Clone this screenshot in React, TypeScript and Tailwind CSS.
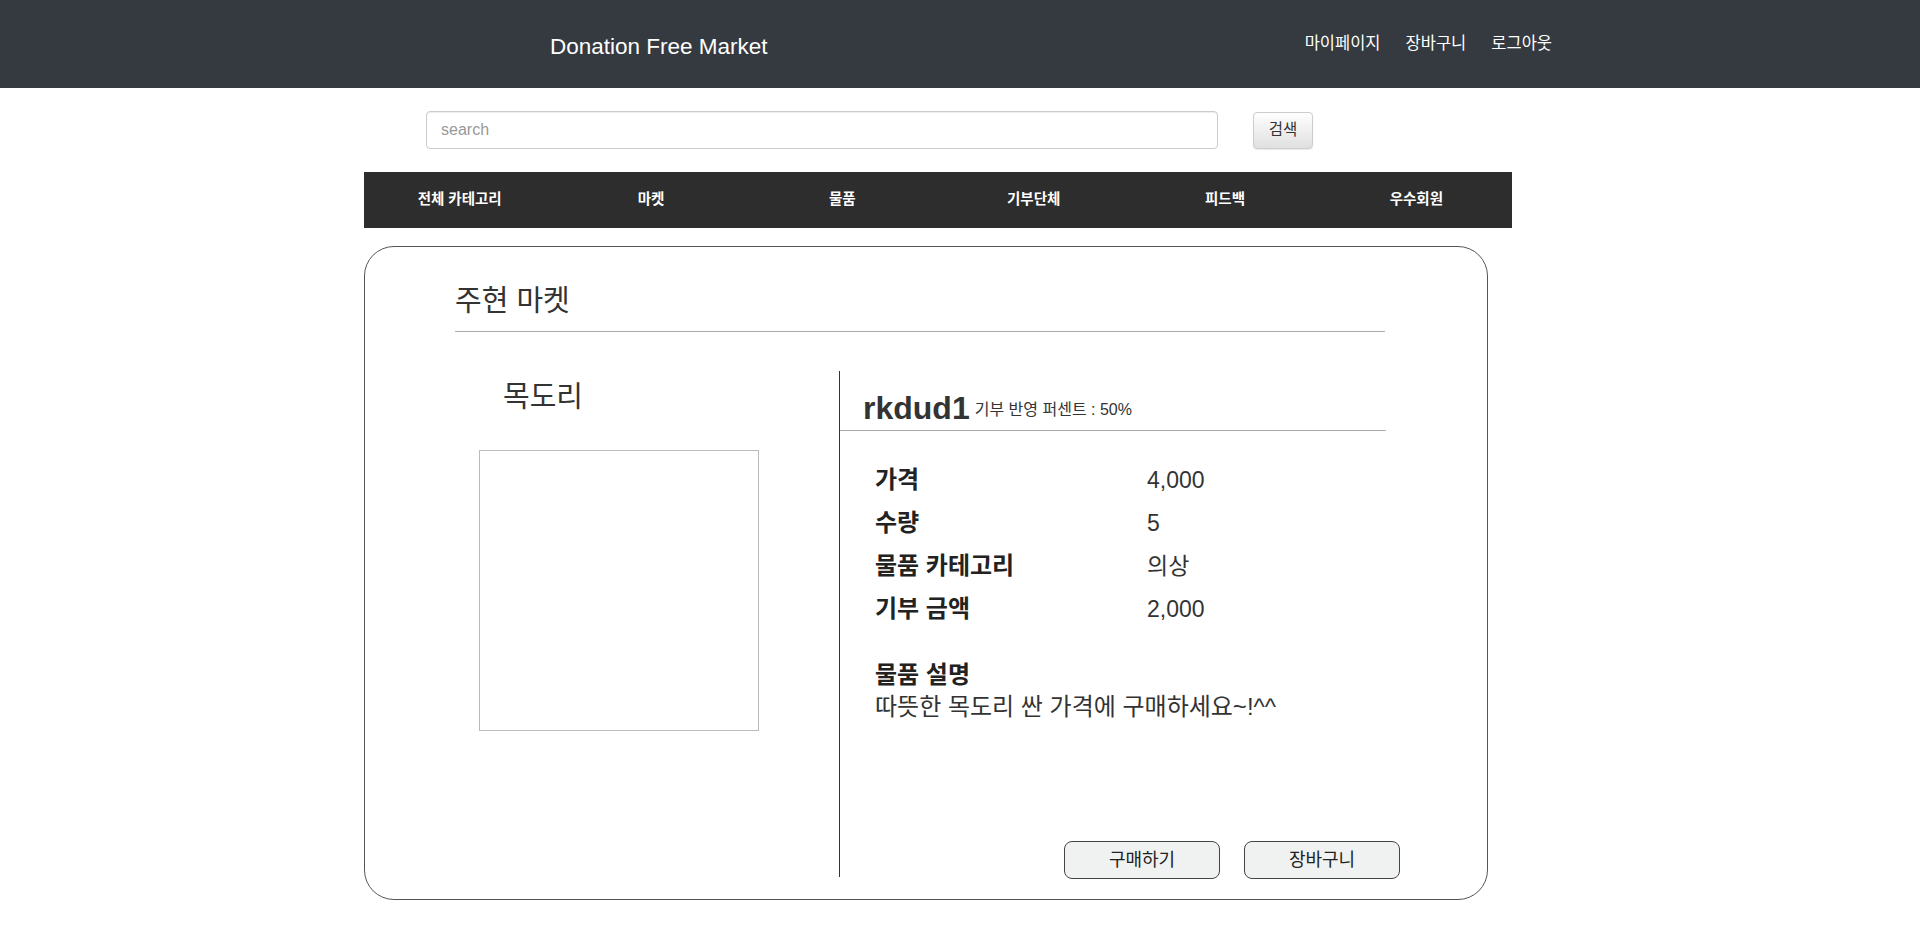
import React from "react";

const cats = ["전체 카테고리", "마켓", "물품", "기부단체", "피드백", "우수회원"];

const rows: [string, string][] = [
  ["가격", "4,000"],
  ["수량", "5"],
  ["물품 카테고리", "의상"],
  ["기부 금액", "2,000"],
];

export default function App() {
  return (
    <div className="min-h-[927px] bg-white font-['Liberation_Sans','Noto_Sans_CJK_KR',sans-serif] text-[#333]">
      <header className="h-[88px] bg-[#343a40] flex items-center justify-between pl-[550px] pr-[368px]">
        <div className="text-white text-[22.5px] leading-[26px] mt-[5px]">Donation Free Market</div>
        <nav className="flex gap-[25px] text-[16.5px] leading-[20px] text-white -mt-[3px]">
          <span>마이페이지</span>
          <span>장바구니</span>
          <span>로그아웃</span>
        </nav>
      </header>

      <div className="ml-[364px] w-[1148px]">
        <div className="flex items-center mt-[23px] pl-[62px]">
          <input
            className="w-[792px] h-[38px] border border-[#ccc] rounded-[4px] pl-[14px] text-[16px] outline-none shadow-[inset_0_1px_1px_rgba(0,0,0,0.075)] placeholder:text-[#999]"
            placeholder="search"
          />
          <button className="ml-[35px] w-[60px] h-[37px] rounded-[4px] border border-[#ccc] bg-gradient-to-b from-white to-[#e0e0e0] text-[15.5px] text-[#333] shadow-[0_1px_1px_rgba(0,0,0,0.08)]">
            검색
          </button>
        </div>

        <div className="mt-[23px] h-[56px] bg-[#2d2d2d] grid grid-cols-6">
          {cats.map((c) => (
            <div key={c} className="flex items-center justify-center text-white text-[14.5px] font-bold">
              {c}
            </div>
          ))}
        </div>

        <div className="mt-[18px] w-[1124px] h-[654px] border border-[#555] rounded-[30px] pt-[39px] pl-[90px] pr-[87px]">
          <div className="w-[930px] border-b border-[#aaa] pb-[15px]">
            <div className="text-[29px] leading-[30px] text-[#333]">주현 마켓</div>
          </div>

          <div className="flex mt-[39px]">
            <div className="w-[384px]">
              <div className="mt-[11px] pl-[48px] text-[29px] leading-[30px]">목도리</div>
              <div className="mt-[38px] ml-[24px] w-[280px] h-[281px] border border-[#bbb]" />
            </div>

            <div className="w-[561px] h-[506px] border-l border-[#333] flex flex-col">
              <div className="w-[546px] h-[60px] border-b border-[#aaa] flex items-baseline pt-[19px] pl-[23px]">
                <span className="text-[32px] leading-[36px] font-bold text-[#333]">rkdud1</span>
                <span className="relative -top-[4px] ml-[5px] text-[16px] leading-none text-[#333]">기부 반영 퍼센트 : 50%</span>
              </div>

              <div className="pt-[27px] pl-[35px]">
                {rows.map(([k, v]) => (
                  <div key={k} className="h-[43px] flex items-center">
                    <div className="w-[272px] text-[24px] leading-[30px] font-bold text-[#222]">{k}</div>
                    <div className="text-[23px] leading-[30px] text-[#333]">{v}</div>
                  </div>
                ))}
                <div className="mt-[29px] text-[24px] leading-[32px] font-bold text-[#222]">물품 설명</div>
                <div className="text-[24px] leading-[32px] text-[#333]">따뜻한 목도리 싼 가격에 구매하세요~!^^</div>
              </div>

              <div className="mt-auto -mb-[2px] flex justify-end gap-[24px]">
                <button className="w-[156px] h-[38px] rounded-[8px] border border-[#444] bg-[#f0f2f1] text-[18px] text-[#222]">
                  구매하기
                </button>
                <button className="w-[156px] h-[38px] rounded-[8px] border border-[#444] bg-[#f0f2f1] text-[18px] text-[#222]">
                  장바구니
                </button>
              </div>
            </div>
          </div>
        </div>
      </div>
    </div>
  );
}
